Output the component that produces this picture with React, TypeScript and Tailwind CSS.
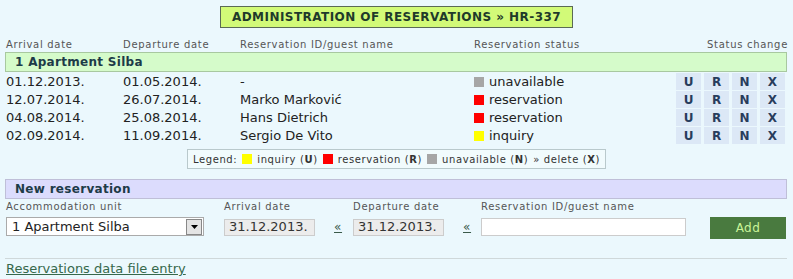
const rows = [
  { arrival: '01.12.2013.', departure: '01.05.2014.', guest: '-', status: 'unavailable' },
  { arrival: '12.07.2014.', departure: '26.07.2014.', guest: 'Marko Marković', status: 'reservation' },
  { arrival: '04.08.2014.', departure: '25.08.2014.', guest: 'Hans Dietrich', status: 'reservation' },
  { arrival: '02.09.2014.', departure: '11.09.2014.', guest: 'Sergio De Vito', status: 'inquiry' },
];

const swatch: Record<string, string> = {
  unavailable: 'bg-[#a6a6a6]',
  reservation: 'bg-[#ff0000]',
  inquiry: 'bg-[#ffff00]',
};

export default function App() {
  return (
    <div className="h-[279px] w-[793px] bg-[#ebf8fd] px-[5px] pt-[6px] font-['DejaVu_Sans',sans-serif] text-[#222]">
      <div className="flex justify-center">
        <div className="flex h-[22px] items-center border border-[#5a6a55] bg-[#d2fa78] px-[11px] text-[12px] font-bold tracking-[0.45px] text-[#1f3a2a]">
          ADMINISTRATION OF RESERVATIONS » HR-337
        </div>
      </div>

      <div className="mt-[9px] grid h-[14px] grid-cols-[117px_117px_234px_1fr_auto] items-center pl-[1px] text-[10px] tracking-[0.7px] text-[#555]">
        <span>Arrival date</span>
        <span>Departure date</span>
        <span>Reservation ID/guest name</span>
        <span>Reservation status</span>
        <span>Status change</span>
      </div>

      <div className="mt-[1px] flex h-[20px] w-[782px] items-center border border-[#a8c8a0] bg-[#d5fbca] pl-[9px] text-[12px] font-bold tracking-[0.3px] text-[#1d3b48]">
        1 Apartment Silba
      </div>

      <div className="mt-[1px] flex flex-col gap-px">
        {rows.map((r) => (
          <div key={r.arrival} className="grid h-[17px] grid-cols-[117px_117px_234px_1fr_auto] items-center pl-[1px] text-[13px] leading-none">
            <span>{r.arrival}</span>
            <span>{r.departure}</span>
            <span>{r.guest}</span>
            <span className="flex items-center gap-[5px]">
              <span className={`h-[10px] w-[10px] ${swatch[r.status]}`} />
              {r.status}
            </span>
            <span className="flex gap-[3px] pr-[3px]">
              {['U', 'R', 'N', 'X'].map((l) => (
                <span key={l} className="flex h-[17px] w-[25px] items-center justify-center bg-[#dce8f6] text-[12px] font-bold text-[#283c5c]">
                  {l}
                </span>
              ))}
            </span>
          </div>
        ))}
      </div>

      <div className="mt-[5px] flex justify-center">
        <div className="flex h-[20px] items-center gap-[5px] border border-[#b9c9cc] bg-[#f1fbfd] px-[5px] text-[10px] tracking-[0.6px] text-[#333]">
          <span>Legend:</span>
          <span className="h-[10px] w-[10px] bg-[#ffff00]" />
          <span>inquiry (<b>U</b>)</span>
          <span className="h-[10px] w-[10px] bg-[#ff0000]" />
          <span>reservation (<b>R</b>)</span>
          <span className="h-[10px] w-[10px] bg-[#a6a6a6]" />
          <span>unavailable (<b>N</b>)</span>
          <span>» delete (<b>X</b>)</span>
        </div>
      </div>

      <div className="mt-[10px] flex h-[20px] w-[782px] items-center border border-[#bfbfd8] bg-[#dcdcfd] pl-[9px] text-[12px] font-bold tracking-[0.3px] text-[#1d3b48]">
        New reservation
      </div>

      <div className="flex items-start pl-[1px] text-[10px] tracking-[0.7px] text-[#555]">
        <div className="flex w-[218px] flex-col gap-[2px]">
          <span className="leading-[16px]">Accommodation unit</span>
          <div className="flex h-[19px] w-[198px] items-center justify-between border border-[#aaa] bg-white pl-[5px] pr-[1px] text-[13px] tracking-normal text-[#222]">
            1 Apartment Silba
            <span className="flex h-[16px] w-[16px] items-center justify-center border border-[#888] bg-[#e4e4e4]">
              <svg width="7" height="4" viewBox="0 0 7 4"><path d="M0 0h7L3.5 4z" fill="#000" /></svg>
            </span>
          </div>
        </div>
        <div className="flex w-[129px] flex-col gap-[3px]">
          <span className="leading-[16px]">Arrival date</span>
          <div className="flex items-center">
            <div className="flex h-[17px] w-[91px] items-center border border-[#ccc] bg-[#ececec] pl-[4px] text-[13px] tracking-normal text-[#333]">31.12.2013.</div>
            <span className="ml-[19px] text-[12px] text-[#3a5a4a] underline">«</span>
          </div>
        </div>
        <div className="flex w-[128px] flex-col gap-[3px]">
          <span className="leading-[16px]">Departure date</span>
          <div className="flex items-center">
            <div className="flex h-[17px] w-[91px] items-center border border-[#ccc] bg-[#ececec] pl-[4px] text-[13px] tracking-normal text-[#333]">31.12.2013.</div>
            <span className="ml-[19px] text-[12px] text-[#3a5a4a] underline">«</span>
          </div>
        </div>
        <div className="flex w-[229px] flex-col gap-[3px]">
          <span className="leading-[16px]">Reservation ID/guest name</span>
          <div className="h-[18px] w-[205px] border border-[#ccc] bg-white" />
        </div>
        <div className="mt-[18px] flex h-[22px] w-[76px] items-center justify-center bg-[#497a3f] text-[12px] tracking-[0.5px] text-[#c9f59a]">
          Add
        </div>
      </div>

      <div className="mt-[19px] h-px w-[782px] bg-[#cfd8da]" />
      <div className="mt-[1px] pl-[1px] text-[13px] leading-[18px] text-[#36684c] underline">Reservations data file entry</div>
    </div>
  );
}
